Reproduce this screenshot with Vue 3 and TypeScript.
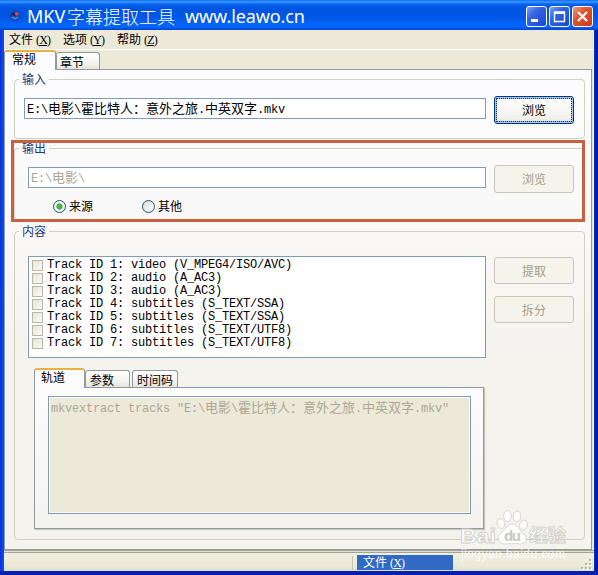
<script setup lang="ts">
import { ref } from 'vue'

interface Run {
  text: string
  wide: boolean
}

// Splits a string into half-width and full-width runs so each keeps its own cell size.
function runs(text: string): Run[] {
  return (text.match(/[\u3000-\u9fff\uff00-\uffef]+|[^\u3000-\u9fff\uff00-\uffef]+/g) ?? []).map((t) => ({
    text: t,
    wide: t.charCodeAt(0) >= 0x3000,
  }))
}

const menus = [
  { label: '文件', key: 'X' },
  { label: '选项', key: 'Y' },
  { label: '帮助', key: 'Z' },
]
const tracks = [
  'video (V_MPEG4/ISO/AVC)',
  'audio (A_AC3)',
  'audio (A_AC3)',
  'subtitles (S_TEXT/SSA)',
  'subtitles (S_TEXT/SSA)',
  'subtitles (S_TEXT/UTF8)',
  'subtitles (S_TEXT/UTF8)',
]
const input = runs('E:\\电影\\霍比特人：意外之旅.中英双字.mkv')
const output = runs('E:\\电影\\')
const command = runs('mkvextract tracks "E:\\电影\\霍比特人：意外之旅.中英双字.mkv"')
const target = ref<'source' | 'other'>('source')
</script>

<template>
  <div class="window">
    <header class="title">
      <svg class="logo" width="14" height="14" viewBox="0 0 14 14">
        <circle cx="7" cy="7" r="5.5" fill="#1b49b4" />
        <path d="M3 5Q6 1 10 5L8 8Q5 5 3 7Z" fill="#1a2b70" />
        <path d="M6.500 4Q10 2 11 5L8 7Z" fill="#d84a68" />
        <path d="M4 8Q7 11 10 8" fill="none" stroke="#4d8cf0" stroke-width="1.5" />
      </svg>
      <span class="t-latin mkv">MKV</span><span class="t-cjk">字幕提取工具</span><span class="t-latin url">www.leawo.cn</span>
      <div class="controls">
        <button class="ctl">
          <svg width="19" height="19"><rect x="4" y="12" width="7" height="3" fill="#fff" /></svg>
        </button>
        <button class="ctl">
          <svg width="19" height="19"><path d="M4.5 5.5h10v9h-10zM4 6h11" fill="none" stroke="#fff" stroke-width="1.4" /><path d="M4 5.5h11" stroke="#fff" stroke-width="2.4" /></svg>
        </button>
        <button class="ctl close">
          <svg width="19" height="19"><path d="M5 5l9 9M14 5l-9 9" stroke="#fff" stroke-width="2.3" /></svg>
        </button>
      </div>
    </header>

    <nav class="menu">
      <span v-for="m in menus" :key="m.key" class="item">{{ m.label }}<span class="key">(<u>{{ m.key }}</u>)</span></span>
    </nav>

    <div class="tabs">
      <span class="tab active">常规</span>
      <span class="tab chapter">章节</span>
    </div>

    <div class="client">
      <main class="panel">
        <section class="group in">
          <div class="legend">输入</div>
          <div class="line">
            <div class="field"><span v-for="(r, i) in input" :key="i" :class="r.wide ? 'wide' : 'half'">{{ r.text }}</span></div>
            <button class="btn focus">浏览</button>
          </div>
        </section>

        <section class="group out">
          <div class="legend">输出</div>
          <div class="line">
            <div class="field dim"><span v-for="(r, i) in output" :key="i" :class="r.wide ? 'wide' : 'half'">{{ r.text }}</span></div>
            <button class="btn off">浏览</button>
          </div>
          <div class="radios">
            <label class="radio" @click="target = 'source'"><i :class="{ on: target === 'source' }"></i>来源</label>
            <label class="radio" @click="target = 'other'"><i :class="{ on: target === 'other' }"></i>其他</label>
          </div>
          <div class="highlight"></div>
        </section>

        <section class="group content">
          <div class="legend">内容</div>
          <div class="line top">
            <ul class="list">
              <li v-for="(t, i) in tracks" :key="i"><i class="box"></i><span class="half">Track ID {{ i + 1 }}: {{ t }}</span></li>
            </ul>
            <div class="actions">
              <button class="btn off">提取</button>
              <button class="btn off">拆分</button>
            </div>
          </div>
          <div class="subtabs">
            <span class="tab active">轨道</span>
            <span class="tab params">参数</span>
            <span class="tab timecode">时间码</span>
          </div>
          <div class="subpanel">
            <div class="command"><span v-for="(r, i) in command" :key="i" :class="r.wide ? 'wide' : 'half'">{{ r.text }}</span></div>
          </div>
        </section>
      </main>
    </div>

    <footer class="status">
      <div class="cell"></div>
      <div class="chosen">文件<span class="key">(<u>X</u>)</span></div>
      <svg class="grip" width="12" height="12">
        <g fill="#fff"><rect x="9" y="1" width="2" height="2" /><rect x="5" y="5" width="2" height="2" /><rect x="9" y="5" width="2" height="2" /><rect x="1" y="9" width="2" height="2" /><rect x="5" y="9" width="2" height="2" /><rect x="9" y="9" width="2" height="2" /></g>
        <g fill="#b8b4a2"><rect x="8" y="0" width="2" height="2" /><rect x="4" y="4" width="2" height="2" /><rect x="8" y="4" width="2" height="2" /><rect x="0" y="8" width="2" height="2" /><rect x="4" y="8" width="2" height="2" /><rect x="8" y="8" width="2" height="2" /></g>
      </svg>
    </footer>

    <svg class="watermark" width="120" height="60" viewBox="0 0 120 60">
      <g fill="#fff" fill-opacity=".85" stroke="#cfcec9" stroke-width=".8">
        <ellipse cx="44" cy="18.500" rx="3.800" ry="5" transform="rotate(-15 44 18.500)" />
        <ellipse cx="50.500" cy="11" rx="3.800" ry="5.500" />
        <ellipse cx="60" cy="11.500" rx="3.800" ry="5.500" transform="rotate(8 60 11.500)" />
        <ellipse cx="66.500" cy="20" rx="3.800" ry="5" transform="rotate(18 66.500 20)" />
        <path d="M55 19C50 19 48 25 44 28C39 32 41 39 48 39C52 39 58 38 62 39C69 40 72 33 66 28C62 25 60 19 55 19Z" />
      </g>
      <g font-family="Liberation Sans, Noto Sans CJK SC, sans-serif" font-weight="bold" fill="#fff" fill-opacity=".85" stroke="#cfcec9" stroke-width=".8">
        <text x="3" y="38" font-size="21" textLength="36" lengthAdjust="spacingAndGlyphs">Bai</text>
        <text x="72" y="37" font-size="18" textLength="37" lengthAdjust="spacingAndGlyphs">经验</text>
      </g>
      <text x="47" y="36" font-family="Liberation Sans, sans-serif" font-weight="bold" font-size="15" fill="#c9c8c3" textLength="17">du</text>
      <text x="4" y="53" font-family="Liberation Sans, sans-serif" font-size="12" fill="#fff" fill-opacity=".85" textLength="104">jingyan.baidu.com</text>
    </svg>
  </div>
</template>

<style>
body {
  margin: 0;
  overflow: hidden;
}
</style>

<style scoped>
* {
  box-sizing: border-box;
}
.window {
  position: relative;
  width: 598px;
  height: 575px;
  padding: 0 4px 4px;
  background: linear-gradient(90deg, #0831d9 0, #0b4be8 3px, #0b4be8 594px, #0019b0 595px, #0019a0 598px);
  font: 12px/16px "Noto Sans CJK SC", sans-serif;
  color: #000;
  box-shadow: inset 0 -4px #0420b0;
}
.title {
  display: flex;
  align-items: center;
  height: 30px;
  margin: 0 -4px;
  padding: 1px 5px 0 8px;
  background: linear-gradient(#0a6cff 0, #3c98ff 2px, #0864ee 4px, #0054e0 8px, #0057e6 18px, #0265fb 24px, #0264fa 27px, #0044cc 30px);
  color: #fff;
  white-space: nowrap;
}
.t-latin {
  font: 18px/28px "Noto Sans", sans-serif;
}
.mkv {
  width: 40px;
  margin-left: 5px;
}
.t-cjk {
  font-size: 18px;
  font-weight: 300;
  line-height: 26px;
  width: 108px;
}
.url {
  margin-left: 10px;
  letter-spacing: -0.1px;
}
.controls {
  display: flex;
  gap: 2px;
  margin: 2px 0 0 auto;
}
.ctl {
  width: 21px;
  height: 21px;
  padding: 0;
  border: 1px solid #fff;
  border-radius: 3px;
  background: linear-gradient(135deg, #7fa2f5, #3465e4 35%, #2453d8 75%, #1b47bd);
}
.ctl.close {
  background: linear-gradient(135deg, #ed9a83, #df5430 40%, #c73b16);
}
.ctl svg {
  display: block;
}
.menu {
  display: flex;
  height: 20px;
  padding: 1px 0 0 5px;
  background: #ece9d8;
  border-bottom: 1px solid #fff;
}
.item {
  width: 54px;
}
.key {
  margin-left: 3px;
  font: 12px/16px "Liberation Serif", serif;
  letter-spacing: -0.8px;
}
.tabs,
.subtabs {
  display: flex;
  align-items: flex-end;
}
.tabs {
  height: 19px;
  background: #ece9d8;
}
.tab {
  border: 1px solid #919b9c;
  border-bottom: 0;
  border-radius: 3px 3px 0 0;
  background: linear-gradient(#fff, #f4f3ee 60%, #e4e3dc);
  line-height: 17px;
  height: 17px;
  padding-left: 4px;
  white-space: nowrap;
}
.tab.active {
  position: relative;
  width: 52px;
  height: 20px;
  margin-bottom: -1px;
  padding-left: 7px;
  line-height: 14px;
  border-top: 2px solid #eeb03c;
  background: #fcfcfe;
}
.tabs .chapter {
  width: 44px;
  padding-left: 3px;
}
.client {
  height: 481px;
  padding-right: 2px;
  background: #ece9d8;
}
.panel {
  height: 481px;
  padding: 9px 6px 0 9px;
  border: 1px solid #919b9c;
  background: linear-gradient(#fcfcfe, #f9f8f7 35%, #f4f3ee 60%);
}
.group {
  border: 1px solid #d0d0bf;
  border-radius: 4px;
  width: 571px;
}
.legend {
  width: 30px;
  height: 16px;
  margin: -9px 0 0 4px;
  padding-left: 3px;
  background: #fbfbfc;
  color: #184080;
  white-space: nowrap;
}
.content .legend {
  background: #f8f7f6;
}
.in {
  height: 60px;
}
.in .line {
  margin: 9px 0 0 9px;
}
.in .field {
  margin-top: -3px;
}
.line {
  display: flex;
  justify-content: space-between;
  padding-right: 10px;
  align-items: center;
}
.field {
  width: 462px;
  height: 21px;
  border: 1px solid #7f9db9;
  background: #fff;
  padding-left: 2px;
  white-space: pre;
  line-height: 17px;
}
.dim {
  color: #aca899;
}
.half {
  font: 12px/13px "Liberation Mono", monospace;
  letter-spacing: -0.2px;
  white-space: pre;
}
.wide {
  font-size: 13px;
}
.btn {
  width: 80px;
  height: 28px;
  padding: 0;
  border: 1px solid #003c74;
  border-radius: 3px;
  background: linear-gradient(#fff, #f3f2ed 80%, #dcd8cc);
  font: 12px/16px "Noto Sans CJK SC", sans-serif;
  color: #000;
}
.focus {
  box-shadow: inset 0 0 0 2px #a5c2f0;
  outline: 1px dotted #234;
  outline-offset: -3px;
}
.off {
  border-color: #c9c7ba;
  background: #f5f4ea;
  color: #a19e8d;
}
.out {
  position: relative;
  height: 74px;
  margin-top: 9px;
  border-bottom-color: transparent;
}
.out .line {
  margin: 9px 0 0 13px;
}
.out .field {
  width: 458px;
  margin-top: -3px;
}
.radios {
  display: flex;
  margin: 5px 0 0 38px;
}
.radio {
  display: flex;
  align-items: center;
  width: 89px;
  gap: 3px;
}
.radio i {
  width: 13px;
  height: 13px;
  border: 1px solid #1d5281;
  border-radius: 50%;
  background: linear-gradient(135deg, #dcdcd7, #fff);
}
.radio i.on {
  background: radial-gradient(circle, #45b845 0 2px, #2ba12b 2.500px, #f4f4f0 3.500px);
}
.highlight {
  position: absolute;
  left: -4px;
  top: -9px;
  width: 574px;
  height: 82px;
  border: 3px solid #c9603f;
}
.content {
  height: 309px;
  margin-top: 9px;
}
.content .line {
  margin: 17px 0 0 13px;
}
.line.top {
  align-items: flex-start;
}
.list {
  width: 458px;
  height: 102px;
  margin: 0;
  padding: 2px 3px;
  list-style: none;
  border: 1px solid #7f9db9;
  background: #fff;
}
.list li {
  display: flex;
  align-items: center;
  height: 13px;
  gap: 4px;
}
.box {
  width: 11px;
  height: 11px;
  border: 1px solid #b8b7a8;
  background: linear-gradient(135deg, #e4e3dc, #fbfbf8);
}
.actions {
  display: grid;
  gap: 12px;
  padding-top: 1px;
}
.actions .btn {
  height: 27px;
}
.subtabs {
  height: 19px;
  margin: 10px 0 0 19px;
}
.timecode {
  width: 46px;
  margin-left: 2px;
}
.params {
  width: 45px;
}
.subtabs .tab.active {
  width: 51px;
  padding-left: 6px;
}
.subpanel {
  width: 450px;
  height: 142px;
  margin-left: 19px;
  padding: 8px 0 0 13px;
  border: 1px solid #919b9c;
  background: linear-gradient(#fcfcfe, #f4f3ee);
  box-shadow: 1px 1px 1px #c5c4bd;
}
.command {
  width: 423px;
  height: 118px;
  padding: 2px 0 0 2px;
  border: 1px solid #7f9db9;
  box-shadow: inset 0 0 0 1px #fff;
  background: #ece9d8;
  color: #aca899;
  white-space: pre;
}
.status {
  display: flex;
  align-items: center;
  height: 21px;
  padding-top: 1px;
  border-top: 3px double #a5a396;
  background: linear-gradient(#f0eee0, #ece9d8 70%, #e0ded0);
}
.cell {
  width: 349px;
  height: 14px;
  border-right: 1px solid #c8c4b0;
}
.chosen {
  width: 96px;
  height: 15px;
  margin-left: 4px;
  padding-left: 6px;
  line-height: 13px;
  background: #316ac5;
  color: #fff;
}
.chosen .key {
  line-height: 13px;
}
.grip {
  margin: 4px 1px 0 auto;
}
.watermark {
  position: absolute;
  left: 457px;
  top: 505px;
}
</style>
